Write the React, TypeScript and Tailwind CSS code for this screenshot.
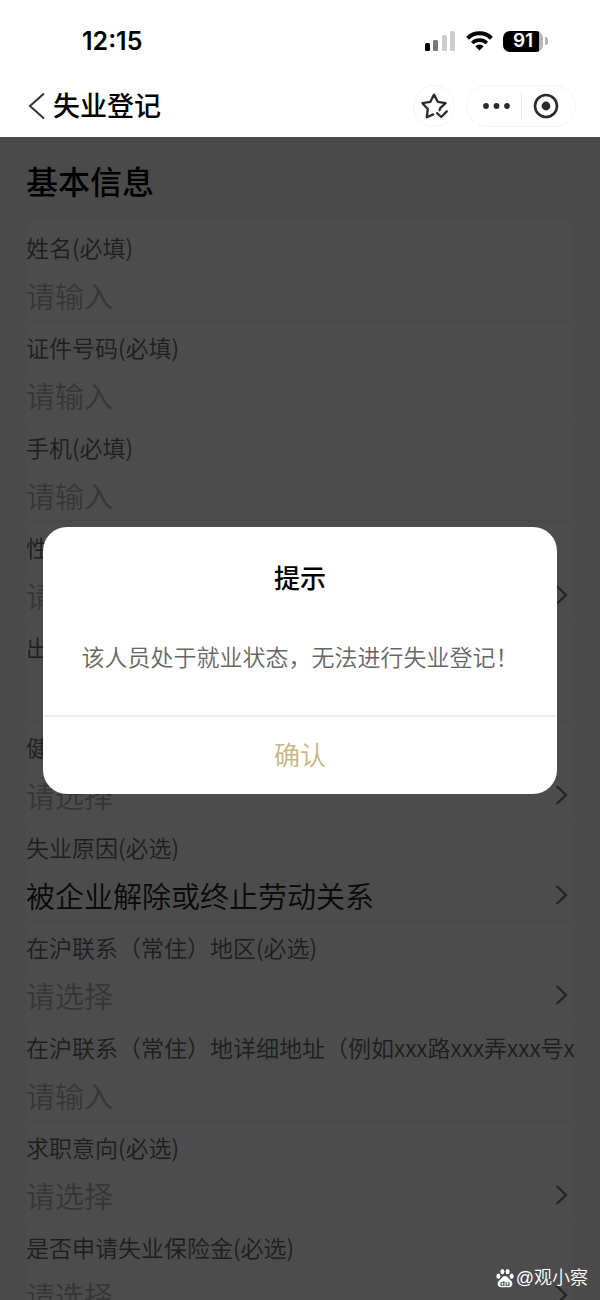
type FieldType = {
    id: string;
    label: string;
    kind: "input" | "select" | "date";
    value?: string;
};

const fields: FieldType[] = [
    { id: "name", label: "姓名(必填)", kind: "input" },
    { id: "idNumber", label: "证件号码(必填)", kind: "input" },
    { id: "phone", label: "手机(必填)", kind: "input" },
    { id: "gender", label: "性别(必选)", kind: "select" },
    { id: "birthday", label: "出生日期", kind: "date" },
    { id: "health", label: "健康状况(必选)", kind: "select" },
    {
        id: "reason",
        label: "失业原因(必选)",
        kind: "select",
        value: "被企业解除或终止劳动关系",
    },
    { id: "area", label: "在沪联系（常住）地区(必选)", kind: "select" },
    {
        id: "address",
        label: "在沪联系（常住）地详细地址（例如xxx路xxx弄xxx号x",
        kind: "input",
    },
    { id: "intention", label: "求职意向(必选)", kind: "select" },
    { id: "insurance", label: "是否申请失业保险金(必选)", kind: "select" },
];

const StatusBar = () => {
    return (
        <div className="flex h-20 items-center justify-between pl-[82px] pr-[52px] pt-[2px]">
            <span className="font-['Inter',sans-serif] text-[25px] font-semibold leading-8">
                12:15
            </span>
            <div className="flex items-center gap-[10px]">
                <svg width="31" height="20" viewBox="0 0 31 20">
                    <rect x="0" y="12" width="5" height="8" rx="1.5" fill="#000" />
                    <rect x="8" y="9" width="5" height="11" rx="1.5" fill="#777" />
                    <rect x="17" y="4" width="5" height="16" rx="1.5" fill="#ccc" />
                    <rect x="25" y="0" width="5" height="20" rx="1.5" fill="#ccc" />
                </svg>
                <svg width="27" height="20" viewBox="0 0 27 20" fill="none" stroke="#000">
                    <path d="M1.6 7.2a17 17 0 0 1 23.8 0" strokeWidth="4" />
                    <path d="M6.2 12a10.6 10.6 0 0 1 14.6 0" strokeWidth="3.6" />
                    <path
                        d="M13.5 19.6l-4.2-4.3a6 6 0 0 1 8.4 0z"
                        fill="#000"
                        stroke="none"
                    />
                </svg>
                <div className="flex items-center gap-[2px]">
                    <div className="flex h-[21px] w-10 items-center justify-center rounded-[7px] bg-[linear-gradient(to_right,#000_91%,#b5b5b5_91%)] font-['Inter',sans-serif] text-[19px] font-semibold leading-5 text-white">
                        91
                    </div>
                    <div className="h-2 w-[3px] rounded-r-full bg-[#b5b5b5]"></div>
                </div>
            </div>
        </div>
    );
};

const NavBar = () => {
    return (
        <div className="flex h-[57px] items-start justify-between pl-7 pr-6">
            <div className="flex h-[51px] items-center gap-2">
                <button aria-label="返回">
                    <svg width="17" height="28" viewBox="0 0 17 28" fill="none">
                        <path d="M16 1.5L2 14l14 12.5" stroke="#333" strokeWidth="2" />
                    </svg>
                </button>
                <h1 className="pb-[2px] text-[27px] font-medium leading-8">失业登记</h1>
            </div>
            <div className="flex h-[51px] items-center gap-[11px]">
                <button
                    aria-label="收藏"
                    className="flex size-[42px] items-center justify-center rounded-full border border-[#f5f5f5]"
                >
                    <svg
                        width="28"
                        height="28"
                        viewBox="0 0 28 28"
                        fill="none"
                        stroke="#2b2b2b"
                        strokeWidth="2.3"
                        strokeLinejoin="round"
                        strokeLinecap="round"
                    >
                        <path d="M13.2 22.4l-6.4 2.8 1-8.2L2.4 11.2l8-1.4L14 2.6l3.8 7.2 7.8 1.4-5.2 4.6-.8 2.4" />
                        <path d="M17 21.2l4.2 3.800 5.600-5.600" />
                    </svg>
                </button>
                <div className="flex h-[42px] w-[110px] items-center rounded-full border border-[#f5f5f5]">
                    <button aria-label="更多" className="flex flex-1 justify-center pl-1">
                        <svg width="28" height="8" viewBox="0 0 28 8" fill="#2b2b2b">
                            <circle cx="4" cy="4" r="2.9" />
                            <circle cx="14.5" cy="4" r="2.9" />
                            <circle cx="25" cy="4" r="2.9" />
                        </svg>
                    </button>
                    <div className="h-[26px] w-px bg-[#e4e4e4]"></div>
                    <button aria-label="关闭" className="flex flex-1 justify-center pr-1">
                        <svg width="26" height="26" viewBox="0 0 26 26">
                            <circle
                                cx="13"
                                cy="13"
                                r="11"
                                fill="none"
                                stroke="#2b2b2b"
                                strokeWidth="2.6"
                            />
                            <circle cx="13" cy="13" r="4.4" fill="#2b2b2b" />
                        </svg>
                    </button>
                </div>
            </div>
        </div>
    );
};

const Field = ({ field }: { field: FieldType }) => {
    const controlStyle =
        "h-11 min-w-0 flex-1 appearance-none bg-transparent p-0 text-[29px] leading-10 outline-none placeholder:text-[#b4b4b4] ";

    return (
        <div className="h-[100px] shrink-0 border-b border-[#f0f0f0] pt-[10px]">
            <label
                htmlFor={field.id}
                className="block whitespace-nowrap text-[23px] leading-8 text-[#666666]"
            >
                {field.label}
            </label>
            <div className="mt-[10px] flex items-center pr-[6px]">
                {field.kind === "select" ? (
                    <>
                        <select
                            id={field.id}
                            className={
                                controlStyle +
                                (field.value ? "text-[#222222]" : "text-[#b4b4b4]")
                            }
                        >
                            <option>{field.value ?? "请选择"}</option>
                        </select>
                        <svg width="13" height="20" viewBox="0 0 13 20" fill="none">
                            <path d="M1.5 1L11 10l-9.5 9" stroke="#777" strokeWidth="2.2" />
                        </svg>
                    </>
                ) : (
                    <input
                        id={field.id}
                        type="text"
                        placeholder={field.kind === "input" ? "请输入" : undefined}
                        className={controlStyle + "text-[#222222]"}
                    />
                )}
            </div>
        </div>
    );
};

const AlertDialog = () => {
    return (
        <div className="absolute inset-0 bg-black/70 px-[43px] pt-[390px]">
            <div
                role="alertdialog"
                aria-labelledby="alert-title"
                aria-describedby="alert-text"
                className="overflow-hidden rounded-3xl bg-white text-center"
            >
                <h2 id="alert-title" className="pt-[30px] text-[26px] font-medium leading-10">
                    提示
                </h2>
                <p
                    id="alert-text"
                    className="pb-[43px] pt-[43px] text-[23px] leading-8 text-[#666666]"
                >
                    该人员处于就业状态，无法进行失业登记！
                </p>
                <button className="h-[79px] w-full border-t-2 border-[#eeeeee] pb-1 text-[26px] leading-10 text-[#c8b584]">
                    确认
                </button>
            </div>
        </div>
    );
};

const Watermark = () => {
    return (
        <div className="absolute bottom-[10px] right-3 flex items-center gap-[2px] text-white">
            <svg width="18" height="20" viewBox="0 0 18 20" fill="currentColor">
                <ellipse cx="2.4" cy="8.2" rx="2" ry="2.6" />
                <ellipse cx="6.4" cy="3.6" rx="2" ry="2.7" />
                <ellipse cx="11.6" cy="3.6" rx="2" ry="2.7" />
                <ellipse cx="15.6" cy="8.2" rx="2" ry="2.6" />
                <path d="M9 8c2.2 0 3 1.6 4.2 2.9 1.3 1.4 3.2 2.5 3.2 4.9 0 2.2-1.5 3.4-3.4 3.4H5c-1.9 0-3.4-1.2-3.4-3.4 0-2.4 1.9-3.5 3.2-4.9C6 9.6 6.8 8 9 8z" />
                <text
                    x="9"
                    y="17.5"
                    textAnchor="middle"
                    fill="#4b4b4b"
                    className="font-['Liberation_Sans',sans-serif] text-[8px] font-bold"
                >
                    du
                </text>
            </svg>
            <span className="font-['Liberation_Sans','Noto_Sans_CJK_SC',sans-serif] text-lg leading-6">
                @观小察
            </span>
        </div>
    );
};

const App = () => {
    return (
        <div
            lang="zh-CN"
            className="relative flex h-screen flex-col overflow-hidden bg-white font-['Noto_Sans_CJK_SC',sans-serif] font-[350] text-black"
        >
            <header className="shrink-0">
                <StatusBar />
                <NavBar />
            </header>
            <main className="relative min-h-0 flex-1 overflow-hidden bg-[#f7f7f7] px-[26px]">
                <h2 className="pb-[21px] pt-[23px] text-[32px] font-medium leading-10">
                    基本信息
                </h2>
                <form className="flex flex-col bg-white">
                    {fields.map((field) => (
                        <Field key={field.id} field={field} />
                    ))}
                </form>
                <AlertDialog />
            </main>
            <Watermark />
        </div>
    );
};

export default App;
